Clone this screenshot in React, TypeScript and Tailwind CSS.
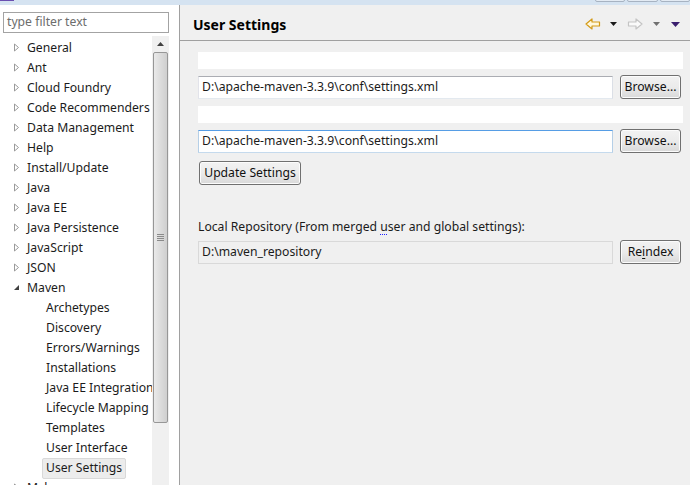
import React from "react"

const topItems = [
  "General",
  "Ant",
  "Cloud Foundry",
  "Code Recommenders",
  "Data Management",
  "Help",
  "Install/Update",
  "Java",
  "Java EE",
  "Java Persistence",
  "JavaScript",
  "JSON",
]

const mavenChildren = [
  "Archetypes",
  "Discovery",
  "Errors/Warnings",
  "Installations",
  "Java EE Integration",
  "Lifecycle Mapping",
  "Templates",
  "User Interface",
]

function Collapsed() {
  return (
    <svg width="7" height="9" viewBox="0 0 7 9" className="shrink-0">
      <path d="M1.5 1 L5.5 4.5 L1.5 8 Z" fill="none" stroke="#9a9a9a" strokeWidth="1" />
    </svg>
  )
}

function Expanded() {
  return (
    <svg width="7" height="9" viewBox="0 0 7 9" className="shrink-0">
      <path d="M6 2 L6 7 L1 7 Z" fill="#404040" />
    </svg>
  )
}

function Button({ label, className = "" }: { label: React.ReactNode; className?: string }) {
  return (
    <div
      className={
        "flex items-center justify-center rounded-[3px] border border-[#707070] bg-gradient-to-b from-[#f2f2f2] via-[#ebebeb] to-[#d9d9d9] text-[#111] shadow-[inset_0_0_0_1px_#fcfcfc] " +
        className
      }
    >
      {label}
    </div>
  )
}

function TreeRow({ children, indent, selected }: { children: React.ReactNode; indent?: boolean; selected?: boolean }) {
  return (
    <div className="flex h-5 items-center whitespace-nowrap">
      {indent ? (
        <div
          className={
            "ml-[42px] flex h-[21px] items-center px-[3px] " +
            (selected ? "rounded-[2px] border border-[#d9d9d9] bg-[#ececec]" : "border border-transparent")
          }
        >
          {children}
        </div>
      ) : (
        children
      )}
    </div>
  )
}

export default function App() {
  return (
    <div
      className="relative flex h-[485px] w-[690px] flex-col overflow-hidden bg-[#f0f0f0] text-[12.2px] text-[#1b1b1b]"
      style={{ fontFamily: '"Noto Sans", "Liberation Sans", sans-serif' }}
    >
      {/* window title strip */}
      <div className="relative h-[5px] shrink-0 bg-[#d5e3f1]">
        <div className="absolute left-0 top-0 h-[1px] w-[14px] bg-[#6a4fb0]" />
        <div className="absolute right-0 top-[-4px] flex gap-[2px]">
          <div className="h-[6px] w-[30px] rounded-b-[2px] border border-[#a7b3c2] bg-[#e3ebf4]" />
          <div className="h-[6px] w-[31px] rounded-b-[2px] border border-[#a7b3c2] bg-[#e3ebf4]" />
          <div className="h-[6px] w-[30px] rounded-b-[2px] border border-[#a7b3c2] bg-[#e3ebf4]" />
        </div>
      </div>

      <div className="flex min-h-0 flex-1">
        {/* left: preference tree */}
        <div className="flex w-[180px] shrink-0 flex-col border-r border-[#a0a0a0] bg-white">
          <div className="ml-[3px] mt-[7px] flex h-[21px] w-[166px] items-center border border-[#a3a3a3] px-[3px] text-[#6d6d6d]">
            type filter text
          </div>
          <div className="mt-[5px] flex min-h-0 flex-1">
            <div className="w-[152px] overflow-hidden">
              {topItems.map((t) => (
                <TreeRow key={t}>
                  <div className="flex items-center">
                    <div className="ml-[13px] mr-[7px] flex w-[7px]">
                      <Collapsed />
                    </div>
                    <span>{t}</span>
                  </div>
                </TreeRow>
              ))}
              <TreeRow>
                <div className="flex items-center">
                  <div className="ml-[13px] mr-[7px] flex w-[7px]">
                    <Expanded />
                  </div>
                  <span>Maven</span>
                </div>
              </TreeRow>
              {mavenChildren.map((t) => (
                <TreeRow key={t} indent>
                  {t}
                </TreeRow>
              ))}
              <TreeRow indent selected>
                User Settings
              </TreeRow>
              <TreeRow>
                <div className="flex items-center">
                  <div className="ml-[13px] mr-[7px] flex w-[7px]">
                    <Collapsed />
                  </div>
                  <span>Mylyn</span>
                </div>
              </TreeRow>
            </div>
            {/* scrollbar */}
            <div className="-mt-[2px] flex w-[17px] flex-col items-center bg-[#f0f0f0]">
              <div className="flex h-[16px] items-center justify-center">
                <svg width="7" height="4" viewBox="0 0 7 4">
                  <path d="M0 4 L3.5 0 L7 4 Z" fill="#404040" />
                </svg>
              </div>
              <div className="flex h-[371px] w-[15px] items-center justify-center rounded-[2px] border border-[#979797] bg-gradient-to-r from-[#eaeaea] via-[#dcdcdc] to-[#cfcfcf]">
                <div className="flex flex-col gap-[1px]">
                  <div className="h-[1px] w-[7px] bg-[#8a8a8a]" />
                  <div className="h-[1px] w-[7px] bg-[#8a8a8a]" />
                  <div className="h-[1px] w-[7px] bg-[#8a8a8a]" />
                  <div className="h-[1px] w-[7px] bg-[#8a8a8a]" />
                </div>
              </div>
            </div>
            <div className="w-[10px] bg-white" />
          </div>
        </div>

        {/* right: page */}
        <div className="flex min-w-0 flex-1 flex-col">
          <div className="flex h-[36px] shrink-0 items-center border-b border-[#a0a0a0] pl-[13px] pr-[10px] pt-[3px]">
            <div className="text-[14px] font-bold text-black">User Settings</div>
            <div className="ml-auto flex items-center">
              <svg width="16" height="12" viewBox="0 0 16 12">
                <path d="M1 6 L7 1 L7 4 L14.5 4 L14.5 8 L7 8 L7 11 Z" fill="#fff8dc" stroke="#d39a17" strokeWidth="1.2" strokeLinejoin="round" />
              </svg>
              <svg width="7" height="4" viewBox="0 0 7 4" className="ml-[9px]">
                <path d="M0 0 L7 0 L3.5 4 Z" fill="#1a1a1a" />
              </svg>
              <svg width="16" height="12" viewBox="0 0 16 12" className="ml-[10px]">
                <path d="M15 6 L9 1 L9 4 L1.5 4 L1.5 8 L9 8 L9 11 Z" fill="#fafafa" stroke="#c4c4c4" strokeWidth="1.2" strokeLinejoin="round" />
              </svg>
              <svg width="7" height="4" viewBox="0 0 7 4" className="ml-[10px]">
                <path d="M0 0 L7 0 L3.5 4 Z" fill="#707070" />
              </svg>
              <svg width="9" height="5" viewBox="0 0 9 5" className="ml-[11px]">
                <path d="M0 0 L9 0 L4.5 5 Z" fill="#3a1f6e" />
              </svg>
            </div>
          </div>

          <div className="flex flex-col pl-[18px] pr-[7px] pt-[11px]">
            <div className="h-[17px] bg-white" />
            <div className="mt-[6px] flex items-center gap-[7px] pr-[2px]">
              <div className="flex h-[23px] flex-1 items-center border border-[#abadb3] border-b-[#e3e9ef] border-l-[#e2e3ea] border-r-[#dbdfe6] bg-white px-[3px]">
                D:\apache-maven-3.3.9\conf\settings.xml
              </div>
              <Button label="Browse..." className="h-[24px] w-[61px]" />
            </div>
            <div className="mt-[7px] h-[17px] bg-white" />
            <div className="mt-[6px] flex items-center gap-[7px] pr-[2px]">
              <div className="flex h-[23px] flex-1 items-center border border-[#569de5] border-b-[#c5daed] border-l-[#b5cfe7] border-r-[#b5cfe7] bg-white px-[3px]">
                D:\apache-maven-3.3.9\conf\settings.xml
              </div>
              <Button label="Browse..." className="h-[24px] w-[61px]" />
            </div>
            <div className="mt-[8px] flex">
              <Button label="Update Settings" className="ml-[1px] h-[24px] w-[102px]" />
            </div>
            <div className="mt-[34px] leading-[16px]">
              Local Repository (From merged <span className="underline decoration-dotted decoration-[#2020ff] underline-offset-[3px]">u</span>ser and global settings):
            </div>
            <div className="mt-[5px] flex items-center gap-[7px] pr-[2px]">
              <div className="flex h-[23px] flex-1 items-center border border-[#d9d9d9] bg-[#f0f0f0] px-[3px]">
                D:\maven_repository
              </div>
              <Button
                label={
                  <span>
                    Re<span className="underline underline-offset-[2px]">i</span>ndex
                  </span>
                }
                className="h-[24px] w-[61px]"
              />
            </div>
          </div>
        </div>
      </div>
    </div>
  )
}
